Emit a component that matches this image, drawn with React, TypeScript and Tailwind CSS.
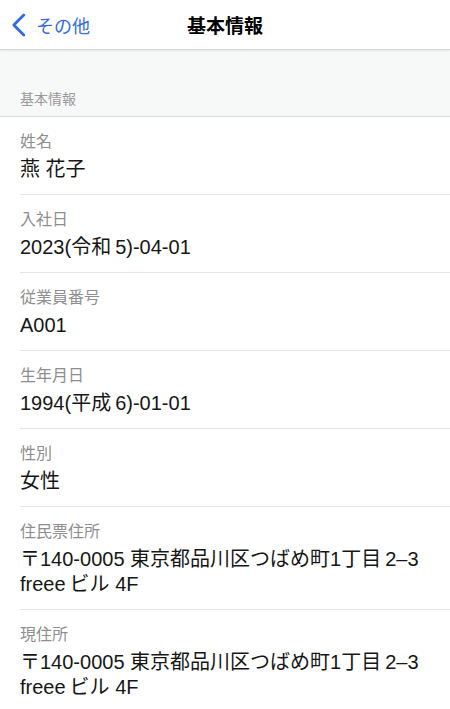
import React from "react";

const G = () => <span className="inline-block w-[4px]" />;

const rows: { label: string; value: React.ReactNode }[] = [
  { label: "姓名", value: "燕 花子" },
  { label: "入社日", value: <>2023(令和<G />5)-04-01</> },
  { label: "従業員番号", value: "A001" },
  { label: "生年月日", value: <>1994(平成<G />6)-01-01</> },
  { label: "性別", value: "女性" },
  {
    label: "住民票住所",
    value: (
      <>
        <div>〒140-0005 東京都品川区つばめ町1丁目<G />2–3</div>
        <div>freee<G />ビル 4F</div>
      </>
    ),
  },
  {
    label: "現住所",
    value: (
      <>
        <div>〒140-0005 東京都品川区つばめ町1丁目<G />2–3</div>
        <div>freee<G />ビル 4F</div>
      </>
    ),
  },
];

export default function App() {
  return (
    <div
      className="w-[450px] h-[709px] overflow-hidden bg-white"
      style={{ fontFamily: '"Liberation Sans", "Noto Sans CJK JP", sans-serif' }}
    >
      <header className="relative h-[50px] flex items-center bg-white border-b border-[#d6d6d6] shadow-[0_1px_2px_rgba(0,0,0,0.08)] z-10">
        <div className="flex items-center pl-[11px] gap-[10px] text-[#2f6be4]">
          <svg width="15" height="24" viewBox="0 0 15 24" fill="none">
            <path d="M12.8 2 L2.8 12 L12.8 22" stroke="#2f6be4" strokeWidth="2.8" strokeLinecap="round" strokeLinejoin="round" />
          </svg>
          <span className="text-[18px] leading-none" style={{ fontFamily: '"Noto Sans CJK JP", sans-serif' }}>その他</span>
        </div>
        <h1
          className="absolute left-0 right-0 text-center text-[19px] font-bold text-black leading-none pointer-events-none"
          style={{ fontFamily: '"Noto Sans CJK JP", sans-serif' }}
        >
          基本情報
        </h1>
      </header>
      <div className="bg-[#f7f8f8] h-[67px] flex items-end pl-[20px] pb-[7px] border-b border-[#dcdcdc]">
        <span className="text-[14px] leading-[20px] text-[#999]">基本情報</span>
      </div>
      <div className="pl-[20px]">
        {rows.map((r, i) => (
          <div
            key={i}
            className={`pt-[13px] pb-[12px] pr-[20px] ${i < rows.length - 1 ? "border-b border-[#e4e4e4]" : ""}`}
          >
            <div className="text-[16px] leading-[24px] text-[#8e8e8e]">{r.label}</div>
            <div className="mt-[3px] text-[20px] leading-[25px] text-[#161616]">{r.value}</div>
          </div>
        ))}
      </div>
    </div>
  );
}
